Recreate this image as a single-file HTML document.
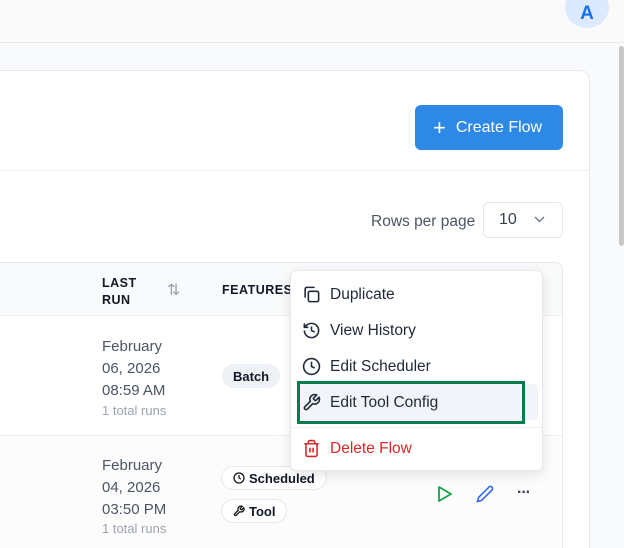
<!DOCTYPE html>
<html style="width:624px;height:548px;overflow:hidden"><head><style>
*{box-sizing:border-box;margin:0;padding:0}
body{width:624px;height:548px;overflow:hidden;background:#f9fafb;font-family:"Liberation Sans",sans-serif;position:relative;color:#111827}
.abs{position:absolute}
.top{left:0;top:0;width:624px;height:43px;background:#fafafa;border-bottom:1px solid #e5e7eb}
.card{left:0;top:70px;width:590px;height:478px;background:#fff;border:1px solid #e5e7eb;border-left:none;border-bottom:none;border-radius:0 10px 0 0}
.t{font-size:15px;color:#4b5563}
.badge{position:absolute;height:24px;border-radius:12px;font-size:13px;font-weight:bold;display:flex;align-items:center;padding:0 11px;gap:4px;color:#111827}
.mi{position:absolute;left:302px;font-size:15.5px;color:#1f2937;display:flex;align-items:center;gap:9px}
</style></head><body>
<div class="abs top"></div>
<div class="abs" style="left:565px;top:-14px;width:44px;height:42px;border-radius:50%;background:#dbeafe;color:#1d6ff2;font-weight:bold;font-size:19px;text-align:center;line-height:56px">A</div>
<div class="abs" style="left:619px;top:46px;width:5px;height:200px;background:#c8c8c8;border-radius:3px"></div>
<div class="abs card"></div>
<div class="abs" style="left:0;top:170px;width:589px;height:1px;background:#f0f1f3"></div>
<div class="abs" style="left:415px;top:105px;width:148px;height:45px;background:#2e88e6;border-radius:6px;color:#fff;font-size:16px;display:flex;align-items:center;padding-left:18px"><span style="font-size:22px;font-weight:300;margin-right:10px;line-height:1">+</span>Create Flow</div>
<div class="abs t" style="left:371px;top:213px;font-size:15.5px">Rows per page</div>
<div class="abs" style="left:483px;top:202px;width:80px;height:36px;border:1px solid #e5e7eb;border-radius:6px;font-size:16px;color:#374151;padding:8px 0 0 15px">10
<svg class="abs" style="left:50px;top:13px" width="11" height="7" viewBox="0 0 11 7"><path d="M1 1l4.5 4.5L10 1" fill="none" stroke="#6b7280" stroke-width="1.3"/></svg></div>
<div class="abs" style="left:0;top:262px;width:563px;height:286px;border:1px solid #e5e7eb;border-left:none;border-bottom:none;border-radius:0 8px 0 0;background:#fff"></div>
<div class="abs" style="left:0;top:263px;width:562px;height:53px;background:#f9fafb;border-bottom:1px solid #eef0f2;border-radius:0 8px 0 0"></div>
<div class="abs" style="left:102px;top:275px;font-size:12.5px;font-weight:bold;letter-spacing:.5px;line-height:17px">LAST<br>RUN</div>
<div class="abs" style="left:167px;top:280px;color:#9ca3af;font-size:16px">⇅</div>
<div class="abs" style="left:222px;top:283px;font-size:12.5px;font-weight:bold;letter-spacing:.5px">FEATURES</div>
<div class="abs" style="left:0;top:435px;width:562px;height:1px;background:#eef0f2"></div>
<div class="abs" style="left:0;top:436px;width:562px;height:112px;background:#fcfcfd"></div>
<div class="abs t" style="left:102px;top:336px;line-height:22px">February<br>06, 2026<br>08:59 AM</div>
<div class="abs" style="left:102px;top:403px;font-size:13px;color:#9ca3af">1 total runs</div>
<div class="abs t" style="left:102px;top:455px;line-height:22px">February<br>04, 2026<br>03:50 PM</div>
<div class="abs" style="left:102px;top:521px;font-size:13px;color:#9ca3af">1 total runs</div>
<div class="badge" style="left:222px;top:364px;background:#eef1f5">Batch</div>
<div class="badge" style="left:221px;top:466px;border:1px solid #e5e7eb;background:#fff">
<svg width="12" height="12" viewBox="0 0 24 24" fill="none" stroke="#111" stroke-width="2.5"><circle cx="12" cy="12" r="10"/><path d="M12 6v6l4 2"/></svg>Scheduled</div>
<div class="badge" style="left:221px;top:499px;border:1px solid #e5e7eb;background:#fff">
<svg width="12" height="12" viewBox="0 0 24 24" fill="none" stroke="#111" stroke-width="2.5"><path d="M14.7 6.3a1 1 0 000 1.4l1.6 1.6a1 1 0 001.4 0l3.77-3.77a6 6 0 01-7.94 7.94l-6.91 6.91a2.12 2.12 0 01-3-3l6.91-6.91a6 6 0 017.94-7.940l-3.76 3.76z"/></svg>Tool</div>
<svg class="abs" style="left:437px;top:485px" width="16" height="18" viewBox="0 0 16 18"><path d="M2 2l12 7-12 7z" fill="none" stroke="#16a34a" stroke-width="1.8" stroke-linejoin="round"/></svg>
<svg class="abs" style="left:476px;top:485px" width="18" height="18" viewBox="0 0 24 24" fill="none" stroke="#2563eb" stroke-width="2"><path d="M17 3a2.85 2.85 0 114 4L7.5 20.5 2 22l1.5-5.5z"/></svg>
<div class="abs" style="left:517px;top:484px;font-size:16px;font-weight:bold;color:#374151;letter-spacing:-1px">···</div>
<div class="abs" style="left:290px;top:270px;width:253px;height:201px;background:#fff;border:1px solid #e5e7eb;border-radius:6px;box-shadow:0 4px 12px rgba(0,0,0,.1)"></div>
<div class="abs" style="left:300px;top:384px;width:238px;height:36px;background:#f1f4f8;border-radius:4px"></div>
<div class="abs" style="left:297px;top:381px;width:228px;height:43px;border:3px solid #0b7a4f"></div>
<div class="abs" style="left:291px;top:427px;width:251px;height:1px;background:#eef0f2"></div>
<div class="mi" style="top:285px"><svg width="19" height="19" viewBox="0 0 24 24" fill="none" stroke="#1f2937" stroke-width="2"><rect x="8" y="8" width="13" height="13" rx="2"/><path d="M4 16V5a2 2 0 012-2h10"/></svg>Duplicate</div>
<div class="mi" style="top:321px"><svg width="19" height="19" viewBox="0 0 24 24" fill="none" stroke="#1f2937" stroke-width="2"><path d="M3 12a9 9 0 109-9 9.75 9.75 0 00-6.74 2.74L3 8"/><path d="M3 3v5h5"/><path d="M12 7v5l4 2"/></svg>View History</div>
<div class="mi" style="top:357px"><svg width="19" height="19" viewBox="0 0 24 24" fill="none" stroke="#1f2937" stroke-width="2"><circle cx="12" cy="12" r="10"/><path d="M12 6v6l4 2"/></svg>Edit Scheduler</div>
<div class="mi" style="top:393px"><svg width="19" height="19" viewBox="0 0 24 24" fill="none" stroke="#1f2937" stroke-width="2"><path d="M14.7 6.3a1 1 0 000 1.4l1.6 1.6a1 1 0 001.4 0l3.77-3.77a6 6 0 01-7.94 7.94l-6.91 6.91a2.12 2.12 0 01-3-3l6.91-6.91a6 6 0 017.94-7.94l-3.76 3.76z"/></svg>Edit Tool Config</div>
<div class="mi" style="top:439px;color:#dc2626"><svg width="19" height="19" viewBox="0 0 24 24" fill="none" stroke="#dc2626" stroke-width="2"><path d="M3 6h18M19 6v14a2 2 0 01-2 2H7a2 2 0 01-2-2V6M8 6V4a2 2 0 012-2h4a2 2 0 012 2v2M10 11v6M14 11v6"/></svg>Delete Flow</div>
</body></html>
